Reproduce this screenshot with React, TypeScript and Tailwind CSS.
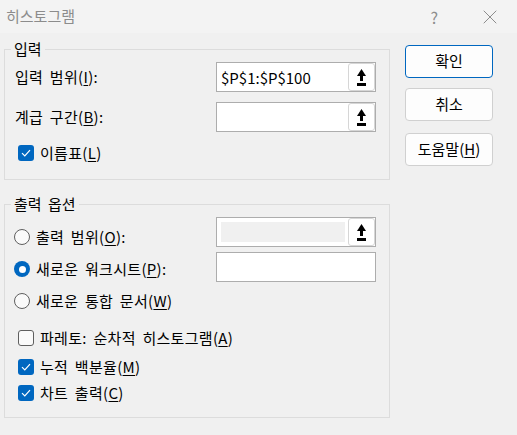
import { X } from 'lucide-react';

const font = { fontFamily: '"Noto Sans CJK KR", "Noto Sans", sans-serif' };

// label text in the dialog runs a little wider than Noto's defaults
const labelCls = 'text-[15px] tracking-[0.3px] [word-spacing:3px]';

function PickIcon() {
  return (
    <svg width="11" height="17" viewBox="0 0 11 17">
      <polygon points="5.5,0 10,7 1,7" fill="#000" />
      <rect x="4" y="6" width="3" height="6" fill="#000" />
      <rect x="1" y="14" width="9" height="3" fill="#000" />
    </svg>
  );
}

function RangeBox({ value, disabled, noButton }: { value?: string; disabled?: boolean; noButton?: boolean }) {
  return (
    <div className="flex h-[30px] w-[160px] items-center border border-[#adadad] bg-white">
      <div className="flex h-full flex-1 items-center pl-[4px]">
        {disabled ? (
          <div className="h-[20px] w-[124px] bg-[#f0f0f0]" />
        ) : (
          <span className="text-[15px] leading-none text-black">{value}</span>
        )}
      </div>
      {!noButton && (
        <div className="flex h-[28px] w-[27px] items-center justify-center rounded-[3px] border border-[#d6d6d6] bg-white">
          <PickIcon />
        </div>
      )}
    </div>
  );
}

function Check({ checked, label, mn, rest = '' }: { checked?: boolean; label: string; mn: string; rest?: string }) {
  return (
    <div className="flex items-center pl-[13px]">
      {checked ? (
        <div className="flex h-[16px] w-[16px] items-center justify-center rounded-[3px] bg-[#0067c0]">
          <svg width="10" height="8" viewBox="0 0 10 8">
            <path d="M1 4.2 L3.8 7 L9 1.2" fill="none" stroke="#fff" strokeWidth="1.2" />
          </svg>
        </div>
      ) : (
        <div className="h-[16px] w-[16px] rounded-[3px] border border-[#5f5f5f] bg-[#fafafa]" />
      )}
      <span className={'ml-[6px] ' + labelCls}>
        {label}(<u className="underline-offset-2">{mn}</u>){rest}
      </span>
    </div>
  );
}

function Radio({ checked, label, mn, rest = '' }: { checked?: boolean; label: string; mn: string; rest?: string }) {
  return (
    <div className="flex h-[32px] items-center pl-[9px]">
      {checked ? (
        <div className="flex h-[16px] w-[16px] items-center justify-center rounded-full bg-[#0067c0]">
          <div className="h-[7px] w-[7px] rounded-full bg-white" />
        </div>
      ) : (
        <div className="h-[16px] w-[16px] rounded-full border border-[#5f5f5f] bg-[#fafafa]" />
      )}
      <span className={'ml-[6px] ' + labelCls}>
        {label}(<u className="underline-offset-2">{mn}</u>){rest}
      </span>
    </div>
  );
}

function DlgButton({ children, primary }: { children: React.ReactNode; primary?: boolean }) {
  return (
    <button
      className={
        'flex h-[33px] w-[88px] items-center justify-center rounded-[4px] border bg-[#fdfdfd] text-[15px] text-black ' +
        (primary ? 'border-[#0067c0]' : 'border-[#d0d0d0]')
      }
    >
      {children}
    </button>
  );
}

export default function App() {
  return (
    <div className="h-[435px] w-[517px] overflow-hidden bg-[#f0f0f0] text-black" style={font}>
      <div className="flex h-[33px] items-center bg-[#f3f3f3]">
        <span className="ml-[6px] text-[15px] text-[#8c8c8c]">히스토그램</span>
        <span className="ml-auto mr-[40px] text-[16px] text-[#8c8c8c]">?</span>
        <X className="mr-[15px] h-[24px] w-[24px] text-[#8c8c8c]" strokeWidth={1} />
      </div>

      <div className="flex">
        <div className="ml-[4px] flex w-[386px] flex-col">
          <fieldset className="mt-[6px] border border-[#dcdcdc] pb-[14px]">
            <legend className="ml-[6px] px-[3px] text-[15px] leading-[20px]">입력</legend>
            <div className="mt-[3px] flex items-center">
              <span className={'w-[211px] pl-[10px] ' + labelCls}>
                입력 범위(<u className="underline-offset-2">I</u>):
              </span>
              <RangeBox value="$P$1:$P$100" />
            </div>
            <div className="mt-[10px] flex items-center">
              <span className={'w-[211px] pl-[10px] ' + labelCls}>
                계급 구간(<u className="underline-offset-2">B</u>):
              </span>
              <RangeBox />
            </div>
            <div className="mt-[9px] flex h-[24px] items-center">
              <Check checked label="이름표" mn="L" />
            </div>
          </fieldset>

          <fieldset className="mt-[14px] border border-[#dcdcdc] pb-[11px]">
            <legend className="ml-[6px] px-[3px] text-[15px] leading-[20px] [word-spacing:3px]">출력 옵션</legend>
            <div className="flex">
              <div className="mt-[7px] w-[211px]">
                <Radio label="출력 범위" mn="O" rest=":" />
                <Radio checked label="새로운 워크시트" mn="P" rest=":" />
                <Radio label="새로운 통합 문서" mn="W" />
              </div>
              <div className="mt-[3px] flex flex-col gap-[5px]">
                <RangeBox disabled />
                <RangeBox noButton />
              </div>
            </div>
            <div className="mt-[8px] flex h-[26px] items-center">
              <Check label="파레토: 순차적 히스토그램" mn="A" />
            </div>
            <div className="mt-[3px] flex h-[26px] items-center">
              <Check checked label="누적 백분율" mn="M" />
            </div>
            <div className="flex h-[26px] items-center">
              <Check checked label="차트 출력" mn="C" />
            </div>
          </fieldset>
        </div>

        <div className="ml-[15px] mt-[12px] flex flex-col">
          <DlgButton primary>확인</DlgButton>
          <div className="mt-[10px]">
            <DlgButton>취소</DlgButton>
          </div>
          <div className="mt-[12px]">
            <DlgButton>
              도움말(<u className="underline-offset-2">H</u>)
            </DlgButton>
          </div>
        </div>
      </div>
    </div>
  );
}
